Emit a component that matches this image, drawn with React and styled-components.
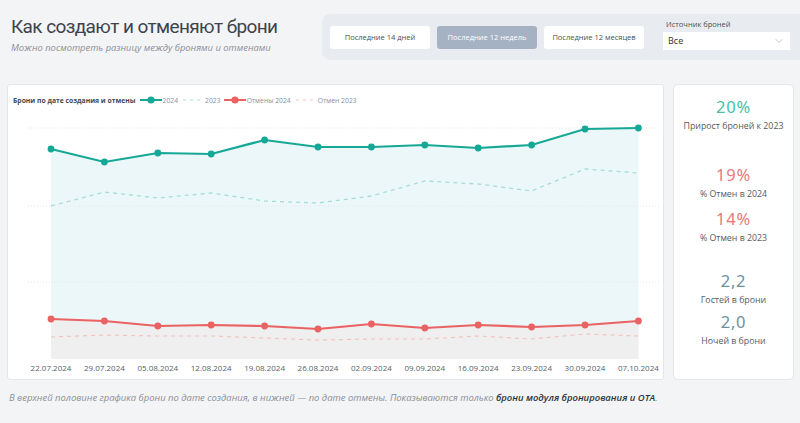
import React from "react";
import styled, { createGlobalStyle } from "styled-components";
import { ChevronDown } from "lucide-react";

const GlobalStyle = createGlobalStyle`
  body {
    margin: 0;
    background: #f3f4f6;
    font-family: "Open Sans", "Liberation Sans", sans-serif;
    color: #333;
  }
`;

const Page = styled.div`
  width: 800px;
  height: 423px;
  overflow: hidden;
  display: flex;
  flex-direction: column;
`;

const Header = styled.div`
  display: flex;
  align-items: flex-start;
  justify-content: space-between;
  height: 84px;
`;

const TitleBlock = styled.div`
  padding: 14px 0 0 11px;
`;

const Title = styled.h1`
  margin: 0;
  font-family: Roboto, sans-serif;
  font-weight: 400;
  font-size: 19px;
  line-height: 26px;
  letter-spacing: -0.6px;
  color: #3d434c;
`;

const Subtitle = styled.div`
  margin-top: 1px;
  font-size: 9.4px;
  font-style: italic;
  color: #8b9098;
`;

const FilterBar = styled.div`
  margin-top: 14px;
  width: 478px;
  height: 46px;
  background: #e8ecf1;
  border-radius: 8px 0 0 8px;
  display: flex;
  align-items: center;
  padding-left: 8px;
  gap: 7px;
  box-sizing: border-box;
`;

const PeriodButton = styled.div`
  width: 100px;
  height: 23px;
  border-radius: 3px;
  display: flex;
  align-items: center;
  justify-content: center;
  font-size: 7.5px;
  color: ${p => (p.active ? "#ffffff" : "#4a5058")};
  background: ${p => (p.active ? "#a4b2c3" : "#ffffff")};
`;

const SourceBox = styled.div`
  margin-left: 12px;
  display: flex;
  flex-direction: column;
  gap: 3px;
  margin-top: -6px;
`;

const SourceLabel = styled.div`
  font-size: 7.5px;
  color: #4a5058;
  padding-left: 3px;
`;

const Select = styled.div`
  width: 127px;
  height: 18px;
  background: #fff;
  display: flex;
  align-items: center;
  justify-content: space-between;
  padding: 0 5px;
  box-sizing: border-box;
  font-size: 9px;
  color: #333;
`;

const Main = styled.div`
  display: flex;
  gap: 9px;
  padding-left: 7px;
  height: 296px;
`;

const ChartCard = styled.div`
  width: 657px;
  background: #fff;
  border: 1px solid #e4e6ea;
  border-radius: 3px;
  box-sizing: border-box;
  display: flex;
  flex-direction: column;
`;

const Legend = styled.div`
  display: flex;
  align-items: center;
  height: 12px;
  margin: 9px 0 0 5px;
  font-size: 6.8px;
  color: #8a8f96;
`;

const LegendTitle = styled.span`
  font-weight: 700;
  color: #444a52;
  margin-right: 4px;
`;

const LegendItem = styled.span`
  display: flex;
  align-items: center;
  margin-right: 3px;
`;

const StatCard = styled.div`
  width: 121px;
  background: #fff;
  border: 1px solid #e4e6ea;
  border-radius: 5px;
  box-sizing: border-box;
  display: flex;
  flex-direction: column;
  align-items: center;
  padding-top: 12px;
`;

const StatValue = styled.div`
  font-family: "Noto Sans", sans-serif;
  font-size: 16.5px;
  line-height: 20px;
  letter-spacing: 0.8px;
  color: ${p => p.color};
  margin-top: ${p => p.gap || 0}px;
`;

const StatLabel = styled.div`
  font-size: 8.8px;
  line-height: 12px;
  color: #555a60;
  margin-top: 3px;
`;

const Footer = styled.div`
  padding: 11px 0 0 9px;
  font-size: 9.45px;
  font-style: italic;
  color: #8b9098;
`;

const FooterStrong = styled.span`
  font-weight: 600;
  color: #2f343a;
`;

const dates = [
  "22.07.2024", "29.07.2024", "05.08.2024", "12.08.2024", "19.08.2024", "26.08.2024",
  "02.09.2024", "09.09.2024", "16.09.2024", "23.09.2024", "30.09.2024", "07.10.2024",
];
const teal = [36, 49, 40, 41, 27, 34, 34, 32, 35, 32, 16, 15];
const teal23 = [93, 79, 85, 80, 88, 90, 83, 68, 71, 78, 56, 60];
const red = [206, 208, 213, 212, 213, 216, 211, 215, 212, 214, 212, 208];
const red23 = [224, 222, 223, 223, 225, 227, 226, 226, 223, 226, 221, 223];

const xs = dates.map((_, i) => 43 + i * 53.4);
const pts = arr => arr.map((y, i) => `${xs[i].toFixed(1)},${y}`).join(" ");
const area = (arr, base) => `${xs[0]},${base} ${pts(arr)} ${xs[xs.length - 1]},${base}`;

const Chart = () => (
  <svg width="655" height="266" viewBox="0 0 655 266" style={{ display: "block", marginTop: 7 }}>
    <polygon points={area(teal, 246)} fill="#ecf7fa" />
    <polygon points={area(red, 246)} fill="#efefef" />
    {[15, 93, 169].map(y => (
      <line key={y} x1="20" x2="652" y1={y} y2={y} stroke="#e3e6e9" strokeDasharray="1 2" />
    ))}
    <polyline points={pts(teal23)} fill="none" stroke="#a9ddd3" strokeWidth="1.3" strokeDasharray="4 4" />
    <polyline points={pts(red23)} fill="none" stroke="#f4c2c2" strokeWidth="1.2" strokeDasharray="4 4" />
    <polyline points={pts(teal)} fill="none" stroke="#16a896" strokeWidth="2.2" />
    {teal.map((y, i) => <circle key={i} cx={xs[i]} cy={y} r="3.4" fill="#16a896" />)}
    <polyline points={pts(red)} fill="none" stroke="#ea6262" strokeWidth="2.2" />
    {red.map((y, i) => <circle key={i} cx={xs[i]} cy={y} r="3.4" fill="#ea6262" />)}
    {dates.map((d, i) => (
      <text key={d} x={xs[i]} y="258" textAnchor="middle" fontSize="8"
        fontFamily="Open Sans, sans-serif" fill="#5a5f66">{d}</text>
    ))}
  </svg>
);

const SolidMark = ({ color }) => (
  <svg width="22" height="8" style={{ marginRight: 1 }}>
    <line x1="0" x2="22" y1="4" y2="4" stroke={color} strokeWidth="2" />
    <circle cx="11" cy="4" r="3.6" fill={color} />
  </svg>
);

const DashMark = ({ color }) => (
  <svg width="18" height="8" style={{ margin: "0 4px 0 2px" }}>
    <line x1="0" x2="18" y1="4" y2="4" stroke={color} strokeWidth="1.2" strokeDasharray="3 4" />
  </svg>
);

export default function App() {
  return (
    <Page>
      <GlobalStyle />
      <Header>
        <TitleBlock>
          <Title>Как создают и отменяют брони</Title>
          <Subtitle>Можно посмотреть разницу между бронями и отменами</Subtitle>
        </TitleBlock>
        <FilterBar>
          <PeriodButton>Последние 14 дней</PeriodButton>
          <PeriodButton active>Последние 12 недель</PeriodButton>
          <PeriodButton>Последние 12 месяцев</PeriodButton>
          <SourceBox>
            <SourceLabel>Источник броней</SourceLabel>
            <Select>
              Все
              <ChevronDown size={12} strokeWidth={1.2} color="#9aa0a8" />
            </Select>
          </SourceBox>
        </FilterBar>
      </Header>
      <Main>
        <ChartCard>
          <Legend>
            <LegendTitle>Брони по дате создания и отмены</LegendTitle>
            <LegendItem><SolidMark color="#16a896" />2024</LegendItem>
            <LegendItem><DashMark color="#a9ddd3" />2023</LegendItem>
            <LegendItem><SolidMark color="#ea6262" />Отмены 2024</LegendItem>
            <LegendItem><DashMark color="#f4c2c2" />Отмен 2023</LegendItem>
          </Legend>
          <Chart />
        </ChartCard>
        <StatCard>
          <StatValue color="#45bfa9">20%</StatValue>
          <StatLabel>Прирост броней к 2023</StatLabel>
          <StatValue color="#e57a7a" gap={33}>19%</StatValue>
          <StatLabel>% Отмен в 2024</StatLabel>
          <StatValue color="#e57a7a" gap={9}>14%</StatValue>
          <StatLabel>% Отмен в 2023</StatLabel>
          <StatValue color="#6d919c" gap={27}>2,2</StatValue>
          <StatLabel>Гостей в брони</StatLabel>
          <StatValue color="#6d919c" gap={6}>2,0</StatValue>
          <StatLabel>Ночей в брони</StatLabel>
        </StatCard>
      </Main>
      <Footer>
        В верхней половине графика брони по дате создания, в нижней — по дате отмены. Показываются только{" "}
        <FooterStrong>брони модуля бронирования и OTA</FooterStrong>.
      </Footer>
    </Page>
  );
}
